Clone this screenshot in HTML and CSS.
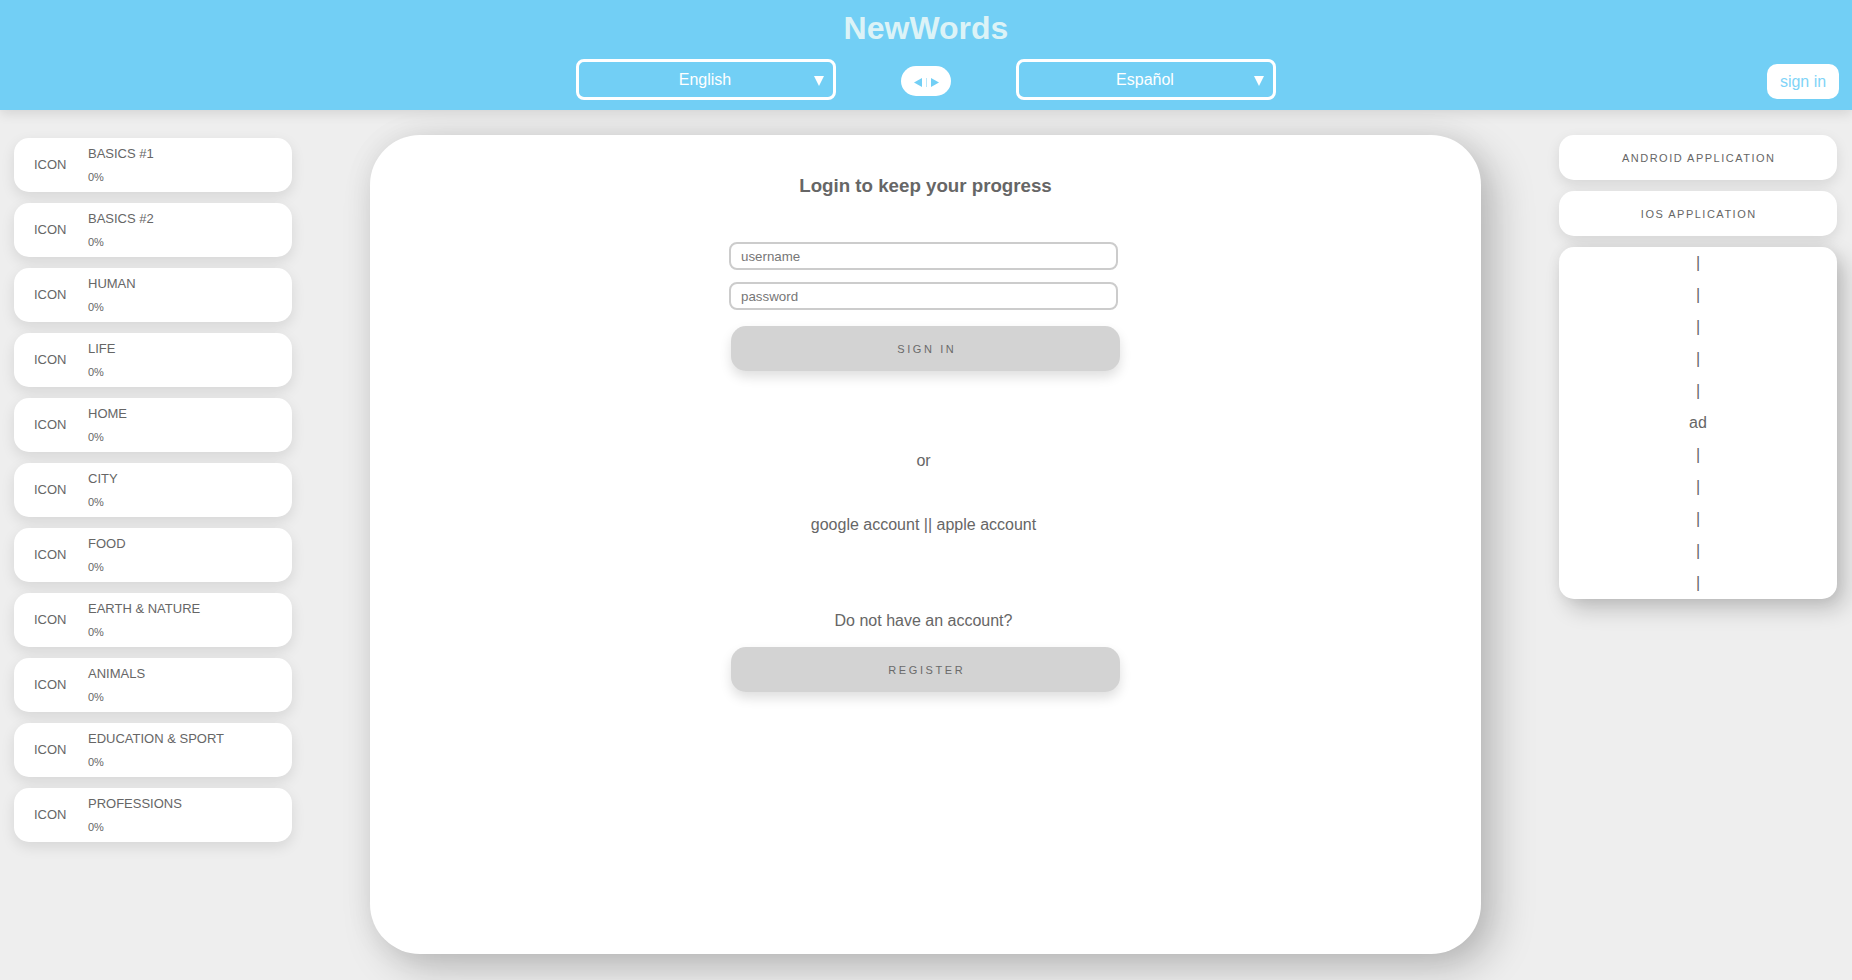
FILE: index.html
```html
<!DOCTYPE html>
<html lang="en">
<head>
<meta charset="utf-8">
<title>NewWords</title>
<link rel="stylesheet" href="styles.css">
</head>
<body>
<header class="topbar">
  <h1 class="brand">NewWords</h1>
  <div class="controls">
    <div class="spacer"></div>
    <div class="lang-row">
      <div class="select"><span>English</span><i class="caret"></i></div>
      <button class="swap" aria-label="swap">
        <svg width="25" height="9" viewBox="0 0 25 9"><polygon points="0,4.5 8,0 8,9" fill="#72cff5"/><rect x="12" y="0" width="1" height="9" fill="#b9e7fa"/><polygon points="25,4.5 17,0 17,9" fill="#72cff5"/></svg>
      </button>
      <div class="select"><span>Español</span><i class="caret"></i></div>
    </div>
    <div class="right"><button class="signin-top">sign in</button></div>
  </div>
</header>

<main class="layout">
  <aside class="lessons">
    <div class="lesson"><span class="icon">ICON</span><div class="info"><div class="name">BASICS #1</div><div class="pct">0%</div></div></div>
    <div class="lesson"><span class="icon">ICON</span><div class="info"><div class="name">BASICS #2</div><div class="pct">0%</div></div></div>
    <div class="lesson"><span class="icon">ICON</span><div class="info"><div class="name">HUMAN</div><div class="pct">0%</div></div></div>
    <div class="lesson"><span class="icon">ICON</span><div class="info"><div class="name">LIFE</div><div class="pct">0%</div></div></div>
    <div class="lesson"><span class="icon">ICON</span><div class="info"><div class="name">HOME</div><div class="pct">0%</div></div></div>
    <div class="lesson"><span class="icon">ICON</span><div class="info"><div class="name">CITY</div><div class="pct">0%</div></div></div>
    <div class="lesson"><span class="icon">ICON</span><div class="info"><div class="name">FOOD</div><div class="pct">0%</div></div></div>
    <div class="lesson"><span class="icon">ICON</span><div class="info"><div class="name">EARTH &amp; NATURE</div><div class="pct">0%</div></div></div>
    <div class="lesson"><span class="icon">ICON</span><div class="info"><div class="name">ANIMALS</div><div class="pct">0%</div></div></div>
    <div class="lesson"><span class="icon">ICON</span><div class="info"><div class="name">EDUCATION &amp; SPORT</div><div class="pct">0%</div></div></div>
    <div class="lesson"><span class="icon">ICON</span><div class="info"><div class="name">PROFESSIONS</div><div class="pct">0%</div></div></div>
  </aside>

  <section class="panel">
    <h3 class="panel-title">Login to keep your progress</h3>
    <input class="field shift" type="text" placeholder="username">
    <input class="field field-2 shift" type="password" placeholder="password">
    <button class="btn btn-signin">SIGN IN</button>
    <p class="txt txt-or">or</p>
    <p class="txt txt-social">google account || apple account</p>
    <p class="txt txt-noacc">Do not have an account?</p>
    <button class="btn btn-register">REGISTER</button>
  </section>

  <aside class="side">
    <div class="app-card">ANDROID APPLICATION</div>
    <div class="app-card">IOS APPLICATION</div>
    <div class="ad-card">
      <div>|</div><div>|</div><div>|</div><div>|</div><div>|</div>
      <div>ad</div>
      <div>|</div><div>|</div><div>|</div><div>|</div><div>|</div>
    </div>
  </aside>
</main>
</body>
</html>
```

FILE: styles.css
```css
* { box-sizing: border-box; }

html, body {
  margin: 0;
  height: 100%;
}

body {
  background: #eeeeee;
  font-family: "Liberation Sans", Arial, Helvetica, sans-serif;
  color: #666666;
  overflow: hidden;
}

/* ---------- header ---------- */
.topbar {
  height: 110px;
  background: #72cff5;
  box-shadow: 0 3px 12px rgba(0, 0, 0, 0.12);
  position: relative;
  z-index: 2;
}

.brand {
  margin: 0;
  padding-top: 10px;
  height: 59px;
  font-size: 32px;
  line-height: 37px;
  font-weight: bold;
  text-align: center;
  color: #dcf3f7;
}

.controls {
  display: grid;
  grid-template-columns: 1fr auto 1fr;
  align-items: start;
}

.lang-row {
  display: flex;
  align-items: center;
  gap: 67px;
}

.select {
  width: 260px;
  height: 41px;
  border: 3px solid #ffffff;
  border-radius: 8px;
  display: flex;
  align-items: center;
  justify-content: center;
  position: relative;
  color: #ffffff;
  font-size: 16px;
}

.select span {
  margin-right: 2px;
}

.caret {
  position: absolute;
  right: 9px;
  top: 14px;
  width: 0;
  height: 0;
  border-left: 5.5px solid transparent;
  border-right: 5.5px solid transparent;
  border-top: 10px solid #ffffff;
}

.swap {
  width: 50px;
  height: 30px;
  border: 0;
  border-radius: 15px;
  background: #ffffff;
  padding: 3px 0 0;
  display: flex;
  align-items: center;
  justify-content: center;
  margin-left: -2px;
  margin-right: -2px;
  margin-top: 2px;
}

.right {
  display: flex;
  justify-content: flex-end;
  padding-right: 13px;
  padding-top: 5px;
}

.signin-top {
  width: 72px;
  height: 35px;
  border: 0;
  border-radius: 10px;
  background: #ffffff;
  color: #7fd4f7;
  font-family: "Liberation Sans", Arial, sans-serif;
  font-size: 16px;
  padding: 0;
}

/* ---------- main layout ---------- */
.layout {
  display: grid;
  grid-template-columns: 278px 1fr 278px;
  column-gap: 78px;
  padding: 25px 15px 0 14px;
  align-items: start;
}

/* ---------- lessons ---------- */
.lessons {
  display: flex;
  flex-direction: column;
  gap: 11px;
  padding-top: 3px;
}

.lesson {
  height: 54px;
  background: #ffffff;
  border-radius: 15px;
  box-shadow: 0 5px 14px rgba(0, 0, 0, 0.1);
  display: flex;
  align-items: flex-start;
  color: #666666;
}

.icon {
  width: 74px;
  padding-left: 20px;
  font-size: 13px;
  line-height: 54px;
}

.info {
  padding-top: 8px;
}

.name {
  font-size: 13px;
  line-height: 15px;
}

.pct {
  font-size: 11px;
  line-height: 13px;
  margin-top: 10px;
}

/* ---------- centre panel ---------- */
.panel {
  height: 819px;
  background: #ffffff;
  border-radius: 50px;
  box-shadow: 0 0 30px rgba(0, 0, 0, 0.06), 14px 14px 40px rgba(0, 0, 0, 0.22);
  display: flex;
  flex-direction: column;
  align-items: center;
  padding-top: 40px;
}

.panel-title {
  margin: 0 0 45px;
  font-size: 18.72px;
  line-height: 22px;
  font-weight: bold;
  color: #666666;
}

.field {
  width: 389px;
  height: 28px;
  border: 2px solid #cccccc;
  border-radius: 8px;
  padding: 0 10px;
  font-family: "Liberation Sans", Arial, sans-serif;
  font-size: 13.333px;
  color: #555555;
  outline: none;
}

.field::placeholder {
  color: #777777;
}

.field-2 {
  margin-top: 12px;
}

.shift {
  margin-right: 4px;
}

.btn {
  width: 389px;
  height: 45px;
  border: 0;
  border-radius: 15px;
  background: #d3d3d3;
  box-shadow: 0 6px 12px rgba(0, 0, 0, 0.13);
  color: #6a6a6a;
  font-family: "Liberation Sans", Arial, sans-serif;
  font-size: 11px;
  letter-spacing: 2.6px;
  padding: 0 0 0 2.6px;
}

.btn-signin {
  margin-top: 16px;
}

.txt {
  margin: 0 4px 0 0;
  font-size: 16px;
  line-height: 18px;
  color: #666666;
}

.txt-or { margin-top: 81px; }
.txt-social { margin-top: 46px; }
.txt-noacc { margin-top: 78px; }

.btn-register {
  margin-top: 17px;
}

/* ---------- right column ---------- */
.side {
  display: flex;
  flex-direction: column;
  gap: 11px;
}

.app-card {
  height: 45px;
  background: #ffffff;
  border-radius: 15px;
  box-shadow: 0 5px 14px rgba(0, 0, 0, 0.1);
  display: flex;
  align-items: center;
  justify-content: center;
  font-size: 11px;
  letter-spacing: 1.5px;
  padding-left: 1.5px;
  color: #666666;
}

.ad-card {
  height: 352px;
  background: #ffffff;
  border-radius: 15px;
  box-shadow: 0 0 14px rgba(0, 0, 0, 0.06), 8px 10px 22px rgba(0, 0, 0, 0.2);
  text-align: center;
  font-size: 16px;
  line-height: 32px;
  color: #666666;
}
```
